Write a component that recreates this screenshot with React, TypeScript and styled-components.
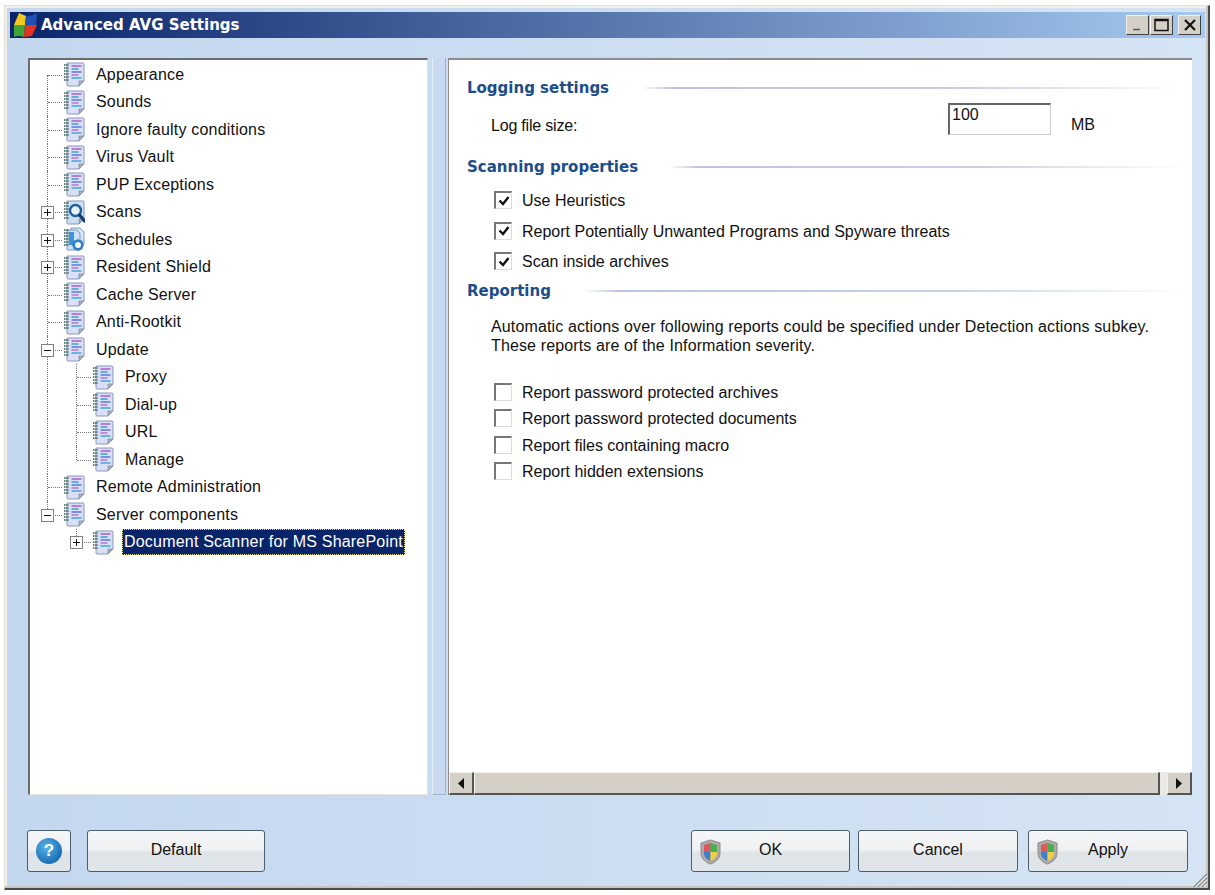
import React from 'react';
import styled, { createGlobalStyle } from 'styled-components';

const GlobalStyle = createGlobalStyle`
  html, body {
    margin: 0;
    padding: 0;
    background: #ffffff;
  }
  body {
    font-family: 'Liberation Sans', Arial, sans-serif;
    font-size: 16px;
    color: #111;
  }
`;

type BranchKind = 'first' | 'tee' | 'pipe' | 'elbow' | 'blank';
type IconKind = 'note' | 'scan' | 'schedule';

interface TreeItem {
  label: string;
  level: 0 | 1;
  outer?: BranchKind;
  branch: BranchKind;
  toggle?: '+' | '-';
  icon?: IconKind;
  selected?: boolean;
}

const treeItems: TreeItem[] = [
  { label: 'Appearance', level: 0, branch: 'first' },
  { label: 'Sounds', level: 0, branch: 'tee' },
  { label: 'Ignore faulty conditions', level: 0, branch: 'tee' },
  { label: 'Virus Vault', level: 0, branch: 'tee' },
  { label: 'PUP Exceptions', level: 0, branch: 'tee' },
  { label: 'Scans', level: 0, branch: 'tee', toggle: '+', icon: 'scan' },
  { label: 'Schedules', level: 0, branch: 'tee', toggle: '+', icon: 'schedule' },
  { label: 'Resident Shield', level: 0, branch: 'tee', toggle: '+' },
  { label: 'Cache Server', level: 0, branch: 'tee' },
  { label: 'Anti-Rootkit', level: 0, branch: 'tee' },
  { label: 'Update', level: 0, branch: 'tee', toggle: '-' },
  { label: 'Proxy', level: 1, outer: 'pipe', branch: 'tee' },
  { label: 'Dial-up', level: 1, outer: 'pipe', branch: 'tee' },
  { label: 'URL', level: 1, outer: 'pipe', branch: 'tee' },
  { label: 'Manage', level: 1, outer: 'pipe', branch: 'elbow' },
  { label: 'Remote Administration', level: 0, branch: 'tee' },
  { label: 'Server components', level: 0, branch: 'elbow', toggle: '-' },
  { label: 'Document Scanner for MS SharePoint', level: 1, outer: 'blank', branch: 'elbow', toggle: '+', selected: true },
];

const checkedOptions = [
  'Use Heuristics',
  'Report Potentially Unwanted Programs and Spyware threats',
  'Scan inside archives',
];

const reportOptions = [
  'Report password protected archives',
  'Report password protected documents',
  'Report files containing macro',
  'Report hidden extensions',
];

const Page = styled.div`
  padding: 5px 5px 5px 4px;
`;

const Window = styled.div`
  box-sizing: border-box;
  width: 1206px;
  height: 885px;
  display: flex;
  flex-direction: column;
  position: relative;
  background: linear-gradient(to right, #c3d7ef, #d5e4f4);
  border-top: 1px solid #e4e0d8;
  border-left: 1px solid #e4e0d8;
  border-right: 2px solid #4a4a4a;
  border-bottom: 2px solid #4a4a4a;
  box-shadow: inset -2px -2px 0 #c8c4bc, inset 2px 2px 0 #f2efe9;
`;

const TitleBar = styled.div`
  margin: 6px 3px 0 5px;
  height: 26px;
  flex: none;
  display: flex;
  align-items: center;
  background: linear-gradient(to right, #0a246a, #a6caf0);
  padding: 0 4px 0 3px;
`;

const TitleText = styled.span`
  margin-left: 3px;
  font-family: 'DejaVu Sans', sans-serif;
  font-weight: 700;
  font-size: 15px;
  color: #ffffff;
  flex: 1;
`;

const CaptionButton = styled.div<{ $gap?: number }>`
  box-sizing: border-box;
  width: 23px;
  height: 20px;
  margin-left: ${(p) => p.$gap ?? 1}px;
  background: #d4d0c8;
  border-top: 1px solid #f4f2ee;
  border-left: 1px solid #f4f2ee;
  border-right: 1px solid #404040;
  border-bottom: 1px solid #404040;
  display: flex;
  align-items: center;
  justify-content: center;
`;

const Content = styled.div`
  flex: 1;
  min-height: 0;
  display: flex;
  padding: 20px 16px 0 23px;
`;

const TreePanel = styled.div`
  box-sizing: border-box;
  width: 400px;
  background: #ffffff;
  border-top: 2px solid #6c6c6c;
  border-left: 2px solid #6c6c6c;
  border-right: 1px solid #e6e2da;
  border-bottom: 1px solid #e6e2da;
  padding-top: 1px;
`;

const Splitter = styled.div`
  box-sizing: border-box;
  width: 14px;
  margin: 0 2px 0 4px;
  background: #c9daf0;
  border-right: 1px solid #9fb0c8;
  border-bottom: 1px solid #9fb0c8;
  border-left: 1px solid #e2ecf8;
`;

const RightPanel = styled.div`
  box-sizing: border-box;
  flex: 1;
  min-width: 0;
  display: flex;
  flex-direction: column;
  background: #ffffff;
  border-top: 2px solid #8c8c8c;
  border-left: 1px solid #8c8c8c;
`;

const Settings = styled.div`
  flex: 1;
  min-height: 0;
  padding: 18px 6px 0 18px;
`;

const Row = styled.div`
  display: flex;
  align-items: center;
  height: 27.5px;
  padding-left: 3px;
`;

const BranchCell = styled.div<{ $kind: BranchKind }>`
  position: relative;
  flex: none;
  width: 29px;
  height: 100%;

  &::before {
    content: '';
    display: ${(p) => (p.$kind === 'blank' ? 'none' : 'block')};
    position: absolute;
    left: 14px;
    top: ${(p) => (p.$kind === 'first' ? '50%' : '0')};
    bottom: ${(p) => (p.$kind === 'elbow' ? '50%' : '0')};
    border-left: 1px dotted #777;
  }

  &::after {
    content: '';
    display: ${(p) => (p.$kind === 'blank' || p.$kind === 'pipe' ? 'none' : 'block')};
    position: absolute;
    left: 15px;
    right: 0;
    top: 50%;
    border-top: 1px dotted #777;
  }
`;

const Toggle = styled.div`
  box-sizing: border-box;
  position: absolute;
  z-index: 1;
  left: 8px;
  top: 50%;
  margin-top: -6px;
  width: 13px;
  height: 13px;
  background: #fff;
  border: 1px solid #808080;
  display: flex;
  align-items: center;
  justify-content: center;
`;

const IconSlot = styled.span`
  display: flex;
  flex: none;
  margin-left: 1px;
`;

const TreeLabel = styled.span<{ $selected?: boolean }>`
  margin-left: ${(p) => (p.$selected ? 8 : 11)}px;
  padding: ${(p) => (p.$selected ? '4px 2px' : '0')};
  line-height: 18px;
  letter-spacing: 0.2px;
  white-space: nowrap;
  color: ${(p) => (p.$selected ? '#ffffff' : '#111111')};
  background: ${(p) => (p.$selected ? '#0a246a' : 'transparent')};
  outline: ${(p) => (p.$selected ? '1px dotted #e8e0a0' : 'none')};
  outline-offset: -1px;
`;

const SectionHead = styled.div<{ $top?: number; $gap: number }>`
  display: flex;
  align-items: center;
  gap: ${(p) => p.$gap}px;
  margin-top: ${(p) => p.$top ?? 0}px;
  height: 18px;
`;

const SectionTitle = styled.h3`
  margin: 0;
  padding-top: 1px;
  font-family: 'DejaVu Sans', sans-serif;
  font-weight: 700;
  font-size: 15px;
  color: #1c4e8a;
  white-space: nowrap;
`;

const SectionRule = styled.div`
  flex: 1;
  height: 2px;
  margin-top: 2px;
  background: linear-gradient(to right, #ffffff, #b9c6df 6%, #c6d1e6 60%, #ffffff);
`;

const SizeRow = styled.div`
  display: grid;
  grid-template-columns: 457px 103px auto;
  align-items: start;
  margin: 7px 0 0 24px;
  height: 32px;
`;

const SizeLabel = styled.span`
  padding-top: 14px;
  letter-spacing: -0.2px;
`;

const SizeInput = styled.div`
  box-sizing: border-box;
  height: 32px;
  padding: 1px 0 0 2px;
  line-height: 18px;
  background: #fff;
  border-top: 2px solid #666;
  border-left: 2px solid #666;
  border-right: 1px solid #ccc;
  border-bottom: 1px solid #ccc;
`;

const SizeUnit = styled(SizeLabel)`
  margin-left: 20px;
  padding-top: 13px;
`;

const OptionList = styled.div<{ $top: number; $pitch: number }>`
  display: flex;
  flex-direction: column;
  margin: ${(p) => p.$top}px 0 0 27px;

  & > div {
    height: ${(p) => p.$pitch}px;
  }
`;

const Option = styled.div`
  display: flex;
  align-items: center;
  white-space: nowrap;
`;

const OptionText = styled.span`
  padding-top: 2px;
`;

const CheckBox = styled.div`
  box-sizing: border-box;
  flex: none;
  width: 18px;
  height: 18px;
  margin-right: 10px;
  background: #fff;
  border-top: 2px solid #777;
  border-left: 2px solid #777;
  border-right: 1px solid #ddd;
  border-bottom: 1px solid #ddd;
  display: flex;
  align-items: center;
  justify-content: center;
`;

const Note = styled.p`
  margin: 17.5px 0 0 24px;
  line-height: 19px;
  letter-spacing: 0.13px;
  white-space: nowrap;
`;

const ScrollBar = styled.div`
  flex: none;
  height: 23px;
  display: flex;
  align-items: stretch;
  background: #eceae4;
`;

const ScrollArrow = styled.div`
  box-sizing: border-box;
  flex: none;
  width: 25px;
  background: #d4d0c8;
  border-top: 1px solid #f4f2ee;
  border-left: 1px solid #f4f2ee;
  border-right: 2px solid #555;
  border-bottom: 2px solid #555;
  display: flex;
  align-items: center;
  justify-content: center;
`;

const ScrollThumb = styled(ScrollArrow)`
  flex: 1;
  margin-right: 7px;
`;

const Footer = styled.div`
  flex: none;
  display: flex;
  align-items: center;
  height: 42px;
  padding: 35px 20px 16px 22px;
`;

const Button = styled.button<{ $width: number; $gap?: number }>`
  box-sizing: border-box;
  position: relative;
  width: ${(p) => p.$width}px;
  height: 42px;
  margin-left: ${(p) => p.$gap ?? 0}px;
  padding: 0 0 3px;
  font: 16px 'Liberation Sans', Arial, sans-serif;
  color: #111;
  border: 1px solid #4c5c70;
  border-radius: 3px;
  background: linear-gradient(to bottom, #f6f7f8 0%, #eef0f2 48%, #dfe4e8 54%, #e0e5e9 100%);
  display: flex;
  align-items: center;
  justify-content: center;
`;

const ButtonShield = styled.span`
  position: absolute;
  left: 8px;
  top: 8px;
  display: flex;
`;

const Spacer = styled.div`
  flex: 1;
`;

const HelpBall = styled.span`
  width: 26px;
  height: 26px;
  margin-top: 3px;
  border-radius: 50%;
  background: radial-gradient(circle at 40% 35%, #5bb4ea, #1a6fb4 70%, #8aa8c0 100%);
  color: #fff;
  font-weight: 700;
  font-size: 17px;
  line-height: 26px;
  text-align: center;
`;

const Grip = styled.svg`
  position: absolute;
  right: 0;
  bottom: 0;
`;

const SpiralRings = () => (
  <>
    {[3, 6, 9, 12, 15, 18].map((y) => (
      <path key={y} d={`M1 ${y}h5`} stroke="#2f5a52" strokeWidth="1.7" strokeDasharray="1.5 .7" />
    ))}
  </>
);

const NoteIcon = ({ kind = 'note' }: { kind?: IconKind }) => (
  <svg width="22" height="25" viewBox="0 0 22 25">
    {kind === 'schedule' && <path d="M8 1h9l4 4v12H8z" fill="#d7e6f6" stroke="#7f9cc4" />}
    <path
      d={kind === 'schedule' ? 'M4 3h10l3 3v17H4z' : 'M4 1h16a1 1 0 0 1 1 1v17l-5 5H5a1 1 0 0 1-1-1z'}
      fill={kind === 'note' ? '#d9dff5' : '#c9e0f3'}
      stroke="#8a97bd"
    />
    {kind !== 'schedule' && <path d="M16 24v-5h5z" fill="#a9afbd" stroke="#7f8aa0" strokeWidth="0.7" />}
    <SpiralRings />
    {kind === 'note' &&
      [4, 7, 10, 13, 16].map((y, i) => (
        <path key={y} d={`M8.500 ${y}h${i % 2 ? 7 : 10}`} stroke={['#b05cc4', '#3a9fd0', '#5a78d8', '#c070d0', '#40a8d8'][i]} strokeWidth="1.500" />
      ))}
    {kind === 'scan' && (
      <g fill="none">
        <circle cx="12.500" cy="10.500" r="5.500" fill="#e6f3fb" stroke="#1c5f9c" strokeWidth="2.400" />
        <path d="M16.500 15l5 6" stroke="#123f70" strokeWidth="3.200" strokeLinecap="round" />
      </g>
    )}
    {kind === 'schedule' && (
      <g>
        <rect x="6" y="5" width="5" height="13" fill="#3c93dc" />
        <circle cx="15" cy="18" r="5.500" fill="#2f7fc8" />
        <path d="M15 12.500v11M9.500 18h11M11 14l8 8M19 14l-8 8" stroke="#2f7fc8" strokeWidth="2" />
        <circle cx="15" cy="18" r="3" fill="#f2f8fc" />
      </g>
    )}
  </svg>
);

const ToggleGlyph = ({ sign }: { sign: '+' | '-' }) => (
  <svg width="9" height="9" viewBox="0 0 9 9">
    <path d="M1 4.500h7" stroke="#111" />
    {sign === '+' && <path d="M4.500 1v7" stroke="#111" />}
  </svg>
);

const Shield = () => (
  <svg width="21" height="26" viewBox="0 0 21 26">
    <path d="M10.500 1L20 4v10c0 6-5 9.500-9.500 11C6 23.500 1 20 1 14V4z" fill="#b0aaa6" stroke="#8f8a88" />
    <path d="M10.500 4L4 6v7h6.500z" fill="#e2555a" />
    <path d="M10.500 4L17 6v7h-6.500z" fill="#45b04e" />
    <path d="M4 13h6.500v9C7 20.500 4 18 4 14z" fill="#3f7fd0" />
    <path d="M17 13h-6.500v9c3.500-1.500 6.500-4 6.500-8z" fill="#f0d040" />
  </svg>
);

const CheckMark = () => (
  <svg width="12" height="12" viewBox="0 0 12 12">
    <path d="M1.500 5.500l3.500 3.500 5.500-7" fill="none" stroke="#111" strokeWidth="2.400" />
  </svg>
);

const Arrow = ({ dir }: { dir: 'left' | 'right' }) => (
  <svg width="6" height="11" viewBox="0 0 6 11">
    <path d={dir === 'left' ? 'M6 0v11L0 5.500z' : 'M0 0v11l6-5.500z'} fill="#111" />
  </svg>
);

const AvgLogo = () => (
  <svg width="25" height="26" viewBox="0 0 25 26" style={{ flex: 'none' }}>
    <path d="M6 1l7 3-1 9H1z" fill="#f2c81e" />
    <path d="M13 4q5 1 11-3l-1 12H12z" fill="#1f50b4" />
    <path d="M1 13h11l-1 12q-5-2-10 0z" fill="#3fa535" />
    <path d="M12 13h12l-5 11-8 1z" fill="#e23222" />
  </svg>
);

const App = () => (
  <Page>
    <GlobalStyle />
    <Window>
      <TitleBar>
        <AvgLogo />
        <TitleText>Advanced AVG Settings</TitleText>
        <CaptionButton>
          <svg width="13" height="12" viewBox="0 0 13 12">
            <path d="M2 10.500h7" stroke="#555" strokeWidth="1.500" />
          </svg>
        </CaptionButton>
        <CaptionButton>
          <svg width="15" height="14" viewBox="0 0 15 14">
            <rect x="1" y="1.500" width="13" height="11" fill="none" stroke="#111" strokeWidth="1.500" />
            <path d="M1 2.500h13" stroke="#111" strokeWidth="1.500" />
          </svg>
        </CaptionButton>
        <CaptionButton $gap={5}>
          <svg width="14" height="12" viewBox="0 0 14 12">
            <path d="M2 1l10 10M12 1L2 11" stroke="#111" strokeWidth="2.200" />
          </svg>
        </CaptionButton>
      </TitleBar>
      <Content>
        <TreePanel>
          {treeItems.map((item) => (
            <Row key={item.label}>
              {item.level === 1 && <BranchCell $kind={item.outer ?? 'blank'} />}
              <BranchCell $kind={item.branch}>
                {item.toggle && (
                  <Toggle>
                    <ToggleGlyph sign={item.toggle} />
                  </Toggle>
                )}
              </BranchCell>
              <IconSlot>
                <NoteIcon kind={item.icon} />
              </IconSlot>
              <TreeLabel $selected={item.selected}>{item.label}</TreeLabel>
            </Row>
          ))}
        </TreePanel>
        <Splitter />
        <RightPanel>
          <Settings>
            <SectionHead $gap={32}>
              <SectionTitle>Logging settings</SectionTitle>
              <SectionRule />
            </SectionHead>
            <SizeRow>
              <SizeLabel>Log file size:</SizeLabel>
              <SizeInput>100</SizeInput>
              <SizeUnit>MB</SizeUnit>
            </SizeRow>
            <SectionHead $top={22} $gap={30}>
              <SectionTitle>Scanning properties</SectionTitle>
              <SectionRule />
            </SectionHead>
            <OptionList $top={10} $pitch={30.5}>
              {checkedOptions.map((label) => (
                <Option key={label}>
                  <CheckBox>
                    <CheckMark />
                  </CheckBox>
                  <OptionText>{label}</OptionText>
                </Option>
              ))}
            </OptionList>
            <SectionHead $top={4.5} $gap={32}>
              <SectionTitle>Reporting</SectionTitle>
              <SectionRule />
            </SectionHead>
            <Note>
              Automatic actions over following reports could be specified under Detection actions subkey.
              <br />
              These reports are of the Information severity.
            </Note>
            <OptionList $top={24.500} $pitch={26.300}>
              {reportOptions.map((label) => (
                <Option key={label}>
                  <CheckBox />
                  <OptionText>{label}</OptionText>
                </Option>
              ))}
            </OptionList>
          </Settings>
          <ScrollBar>
            <ScrollArrow>
              <Arrow dir="left" />
            </ScrollArrow>
            <ScrollThumb />
            <ScrollArrow>
              <Arrow dir="right" />
            </ScrollArrow>
          </ScrollBar>
        </RightPanel>
      </Content>
      <Footer>
        <Button $width={44}>
          <HelpBall>?</HelpBall>
        </Button>
        <Button $width={178} $gap={16}>
          Default
        </Button>
        <Spacer />
        <Button $width={159}>
          <ButtonShield>
            <Shield />
          </ButtonShield>
          OK
        </Button>
        <Button $width={160} $gap={8}>
          Cancel
        </Button>
        <Button $width={160} $gap={10}>
          <ButtonShield>
            <Shield />
          </ButtonShield>
          Apply
        </Button>
      </Footer>
      <Grip width="18" height="18" viewBox="0 0 18 18">
        <path d="M17 4L4 17M17 8L8 17M17 12L12 17" stroke="#8a8a8a" strokeWidth="1.500" />
        <path d="M17 5.500L5.500 17M17 9.500L9.500 17M17 13.500L13.500 17" stroke="#f4f4f4" />
      </Grip>
    </Window>
  </Page>
);

export default App;
